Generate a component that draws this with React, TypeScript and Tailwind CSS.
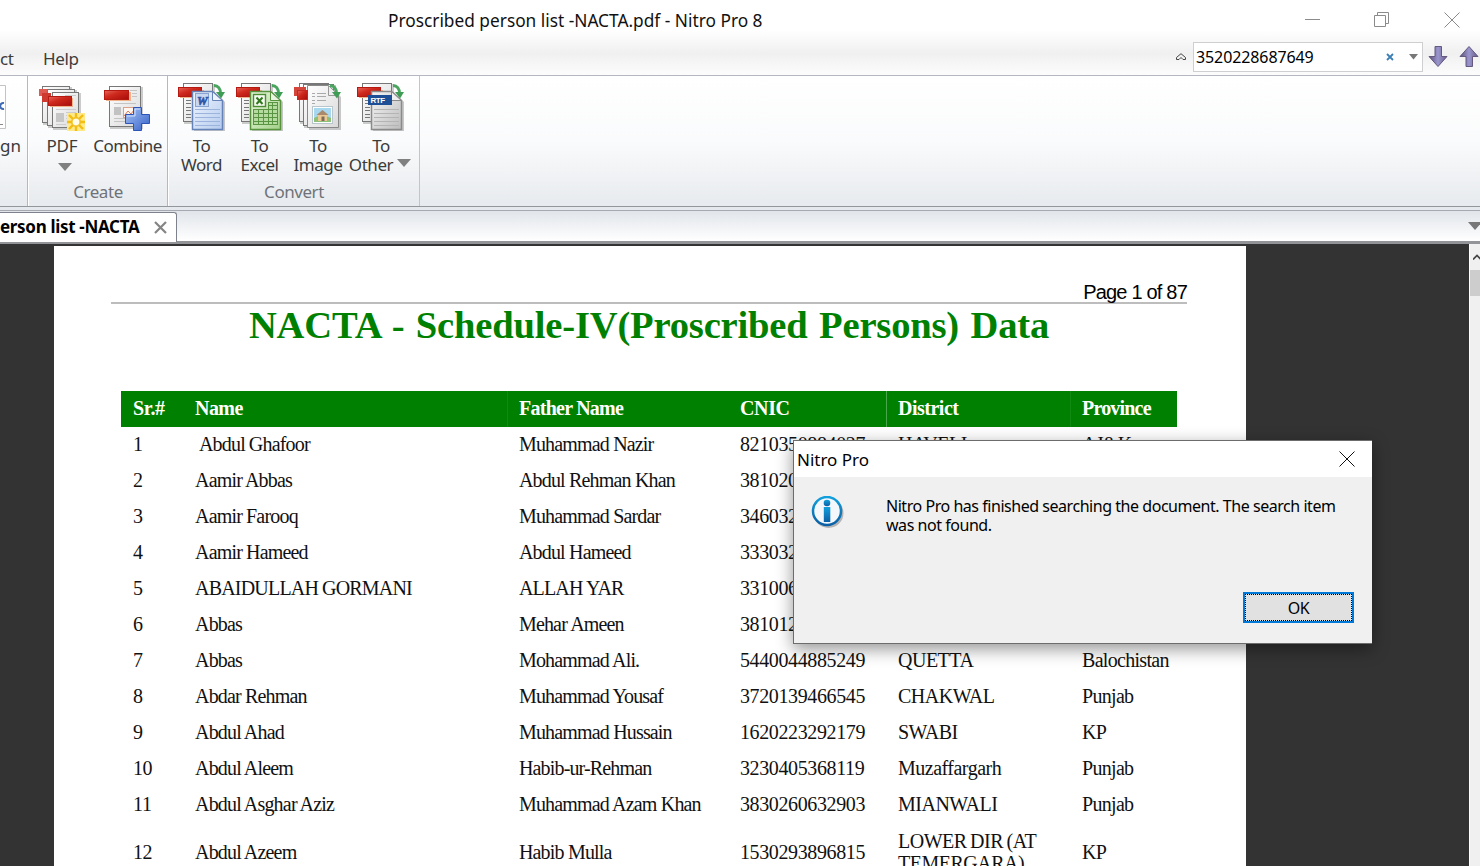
import type { ReactNode } from 'react';

const rows: string[][] = [
  ['1', '\u00a0Abdul Ghafoor', 'Muhammad Nazir', '8210350884027', 'HAVELI', 'AJ&K'],
  ['2', 'Aamir Abbas', 'Abdul Rehman Khan', '381020', '', ''],
  ['3', 'Aamir Farooq', 'Muhammad Sardar', '346032', '', ''],
  ['4', 'Aamir Hameed', 'Abdul Hameed', '333032', '', ''],
  ['5', 'ABAIDULLAH GORMANI', 'ALLAH YAR', '331006', '', ''],
  ['6', 'Abbas', 'Mehar Ameen', '381012', '', ''],
  ['7', 'Abbas', 'Mohammad Ali.', '5440044885249', 'QUETTA', 'Balochistan'],
  ['8', 'Abdar Rehman', 'Muhammad Yousaf', '3720139466545', 'CHAKWAL', 'Punjab'],
  ['9', 'Abdul Ahad', 'Muhammad Hussain', '1620223292179', 'SWABI', 'KP'],
  ['10', 'Abdul Aleem', 'Habib-ur-Rehman', '3230405368119', 'Muzaffargarh', 'Punjab'],
  ['11', 'Abdul Asghar Aziz', 'Muhammad Azam Khan', '3830260632903', 'MIANWALI', 'Punjab'],
  ['12', 'Abdul Azeem', 'Habib Mulla', '1530293896815', 'LOWER DIR (AT TEMERGARA)', 'KP'],
];

const headers = ['Sr.#', 'Name', 'Father Name', 'CNIC', 'District', 'Province'];

const cellStyles = [
  '',
  'tracking-[-0.800px] [word-spacing:-0.300px]',
  'tracking-[-0.850px] [word-spacing:0.200px]',
  '',
  'tracking-[-0.500px] [word-spacing:-1px]',
  'tracking-[-0.700px]',
];

const headerStyles = [
  '',
  'tracking-[-0.550px]',
  'tracking-[-0.750px] border-l border-[#108a10]',
  '',
  'tracking-[-0.500px] border-l border-[#4aa64a]',
  'tracking-[-0.800px] border-l border-[#108a10]',
];

const headerPads = ['pl-[12px]', 'pl-[12px]', 'pl-[11px]', 'pl-[12px]', 'pl-[11px]', 'pl-[11px]'];

function Defs() {
  return (
    <svg className="absolute h-0 w-0" aria-hidden="true">
      <defs>
        <linearGradient id="red" x1="0" y1="0" x2="1" y2="1">
          <stop offset="0" stopColor="#e8675c" />
          <stop offset="0.4" stopColor="#cf2a1e" />
          <stop offset="1" stopColor="#a80c08" />
        </linearGradient>
        <linearGradient id="paper" x1="0" y1="0" x2="1" y2="1">
          <stop offset="0" stopColor="#ffffff" />
          <stop offset="1" stopColor="#d9d9d9" />
        </linearGradient>
        <linearGradient id="word" x1="0" y1="0" x2="1" y2="1">
          <stop offset="0" stopColor="#f2f7ff" />
          <stop offset="1" stopColor="#b4cbee" />
        </linearGradient>
        <linearGradient id="excel" x1="0" y1="0" x2="1" y2="1">
          <stop offset="0" stopColor="#e9f7df" />
          <stop offset="1" stopColor="#a3d188" />
        </linearGradient>
        <linearGradient id="grey" x1="0" y1="0" x2="1" y2="1">
          <stop offset="0" stopColor="#f6f6f6" />
          <stop offset="1" stopColor="#bcbcbc" />
        </linearGradient>
        <linearGradient id="plus" x1="0" y1="0" x2="1" y2="1">
          <stop offset="0" stopColor="#a8c4f5" />
          <stop offset="1" stopColor="#3562c8" />
        </linearGradient>
        <linearGradient id="arrow" x1="0" y1="0" x2="1" y2="0">
          <stop offset="0" stopColor="#5b4f78" />
          <stop offset="0.5" stopColor="#9a97cf" />
          <stop offset="1" stopColor="#665a85" />
        </linearGradient>
        <linearGradient id="info" x1="0" y1="0" x2="0" y2="1">
          <stop offset="0" stopColor="#12a0dc" />
          <stop offset="1" stopColor="#0b5fa5" />
        </linearGradient>
        <radialGradient id="burst">
          <stop offset="0" stopColor="#fffde0" />
          <stop offset="1" stopColor="#f0b90c" />
        </radialGradient>
      </defs>
    </svg>
  );
}

function Sheet({ x, y, w, h, fill = 'url(#paper)', stroke = '#777' }: { x: number; y: number; w: number; h: number; fill?: string; stroke?: string }) {
  return (
    <>
      <rect x={x + 1} y={y + 1} width={w + 1} height={h + 1} fill="#999" opacity="0.5" />
      <rect x={x + 0.5} y={y + 0.5} width={w - 1} height={h - 1} fill={fill} stroke={stroke} />
    </>
  );
}

function PdfIcon() {
  return (
    <svg width="48" height="48" viewBox="0 0 48 48">
      <Sheet x={4} y={2} w={28} h={37} />
      <rect x="1" y="5" width="9" height="7" fill="#dd5b52" />
      <Sheet x={9} y={5} w={28} h={37} />
      <rect x="4" y="9" width="9" height="9" fill="#cf3a30" />
      <Sheet x={14} y={8} w={27} h={36} />
      <path d="M27 11.500h11M18 25.500h20M28 28.500h10M28 31.500h8M28 34.500h4M18 40.500h10" stroke="#ccc" />
      <rect x="18" y="29" width="8" height="9" fill="#c6c6c6" />
      <rect x="12" y="14" width="23" height="9" fill="#efb28b" />
      <rect x="10.500" y="12.500" width="23" height="9" fill="url(#red)" stroke="#b51a12" />
      <rect x="29" y="29" width="18" height="18" fill="#ffe98a" />
      <path d="M38 29v18M29 38h18M31 31l14 14M45 31L31 45" stroke="#f3bd12" strokeWidth="2.400" />
      <circle cx="38" cy="38" r="5" fill="url(#burst)" />
      <circle cx="38" cy="38" r="3.200" fill="#fffde8" />
    </svg>
  );
}

function CombineIcon() {
  return (
    <svg width="48" height="48" viewBox="0 0 48 48">
      <Sheet x={5} y={2} w={32} h={41} />
      <path d="M26 6.500h7M28 9.500h5M28 12.500h5M10 19.500h22M26 24.500h7M10 34.500h13M10 37.500h15" stroke="#c4c4c4" />
      <rect x="10" y="23" width="7" height="8" fill="#c2c2c2" />
      <rect x="19.500" y="23.500" width="11" height="10" fill="#fff7f0" stroke="#dba08c" />
      <path d="m20 32 4-5 3 3 3-4" fill="none" stroke="#d97b5e" />
      <rect x="2" y="8" width="25" height="9" fill="#efb28b" />
      <rect x="0.500" y="6.500" width="24" height="9" fill="url(#red)" stroke="#b51a12" />
      <path d="M29.500 23.500h8v7h8v9h-8v7h-8v-7h-8v-9h8z" fill="url(#plus)" stroke="#2d55b8" strokeLinejoin="round" />
      <path d="M31 25h5M23 32h8V25" stroke="#d4e2ff" fill="none" />
    </svg>
  );
}

function GreenArrow() {
  return (
    <>
      <path d="M36 2.500c4 0 6.500 3 6.500 8" fill="none" stroke="#4aa55f" strokeWidth="3" />
      <path d="M38 9h9l-4 6.500z" fill="#3f9c55" />
    </>
  );
}

function BackSheet() {
  return (
    <>
      <Sheet x={5} y={0} w={30} h={39} />
      <path d="M8 17.500h5M8 20.500h5M8 24.500h5M8 27.500h5M8 31.500h5M8 34.500h5" stroke="#777" />
      <rect x="2" y="7" width="24" height="8" fill="#efb28b" />
      <rect x="0.500" y="4.500" width="23" height="9" fill="url(#red)" stroke="#b51a12" />
    </>
  );
}

function FoldedSheet({ fill, stroke }: { fill: string; stroke: string }) {
  return (
    <>
      <path d="M16 9h21l10 10v29H16z" fill="#777" opacity="0.4" />
      <path d="M14.500 8.500h20l10 9v29h-30z" fill={fill} stroke={stroke} strokeWidth="1.500" />
      <path d="M34.500 8.500v9h10z" fill="#fff" fillOpacity="0.6" stroke={stroke} />
    </>
  );
}

function WordIcon() {
  return (
    <svg width="48" height="48" viewBox="0 0 48 48">
      <BackSheet />
      <FoldedSheet fill="url(#word)" stroke="#6583b8" />
      <GreenArrow />
      <path d="M17 26.500h25M17 30.500h25M17 34.500h25M17 38.500h25M17 42.500h25" stroke="#9cb4dc" />
      <rect x="17.500" y="10.500" width="13" height="13" fill="#c9d8f2" stroke="#8aa2d0" />
      <text x="24" y="21.500" textAnchor="middle" fontSize="12" fontWeight="700" fontStyle="italic" fontFamily="Liberation Serif, serif" fill="#2f55a8" stroke="#2f55a8" strokeWidth="0.600">W</text>
    </svg>
  );
}

function ExcelIcon() {
  return (
    <svg width="48" height="48" viewBox="0 0 48 48">
      <BackSheet />
      <FoldedSheet fill="url(#excel)" stroke="#57923c" />
      <GreenArrow />
      <path d="M32 19h10v23H17V26h15z" fill="#589442" />
      <path d="M18 27h4v3h-4zM23 27h4v3h-4zM28 27h4v3h-4zM33 27h3v3h-3zM37 27h4v3h-4zM18 31h4v3h-4zM23 31h4v3h-4zM28 31h4v3h-4zM33 31h3v3h-3zM37 31h4v3h-4zM18 35h4v3h-4zM23 35h4v3h-4zM28 35h4v3h-4zM33 35h3v3h-3zM37 35h4v3h-4zM18 39h4v2h-4zM23 39h4v2h-4zM28 39h4v2h-4zM33 39h3v2h-3zM37 39h4v2h-4zM33 20h3v2h-3zM37 20h4v2h-4zM33 23h3v3h-3zM37 23h4v3h-4z" fill="#b5dba0" />
      <rect x="17.500" y="11.500" width="12" height="12" fill="#f4fbef" stroke="#4c8c33" strokeWidth="1.400" />
      <path d="m20.500 14.500 6 6.500M26.500 14.500l-6 6.500" stroke="#32781f" strokeWidth="2" />
    </svg>
  );
}

function ImageIcon() {
  return (
    <svg width="48" height="48" viewBox="0 0 48 48">
      <Sheet x={5} y={0} w={30} h={39} />
      <Sheet x={9} y={1} w={31} h={42} />
      <path d="M15 3h21l11 11v33H15z" fill="#777" opacity="0.4" />
      <path d="M13.500 2.500h21l10 10v32h-31z" fill="url(#paper)" stroke="#888" />
      <path d="M34.500 2.500v10h10z" fill="#eee" stroke="#999" />
      <GreenArrow />
      <path d="M18 10.500h3M23 10.500h9M18 13.500h3M23 13.500h9M18 17.500h3M23 17.500h9M18 20.500h3" stroke="#aaa" />
      <rect x="18.500" y="23.500" width="20" height="17" fill="#fff" stroke="#b7c6cd" />
      <rect x="20" y="25" width="17" height="14" fill="#a8d8f0" />
      <path d="M20 35c5-3 11-3 17 0v4H20z" fill="#8fc07a" />
      <path d="m22.500 32 6-5 6 5z" fill="#a98a6c" />
      <path d="M24 32h9v6h-9z" fill="#ecc894" />
      <path d="M27.500 33.500h3V38h-3z" fill="#7d6d5b" />
      <rect x="0" y="4" width="12" height="9" fill="#d4463c" />
      <rect x="3.500" y="7.500" width="10" height="9" fill="url(#red)" stroke="#c02a20" />
    </svg>
  );
}

function OtherIcon() {
  return (
    <svg width="48" height="48" viewBox="0 0 48 48">
      <BackSheet />
      <FoldedSheet fill="url(#grey)" stroke="#8a8a8a" />
      <GreenArrow />
      <path d="M17 26.500h25M17 30.500h25M17 34.500h25M17 38.500h25M17 42.500h25" stroke="#b4b4b4" />
      <rect x="11" y="12" width="24" height="10" fill="#1d4f96" />
      <text x="20.500" y="19.600" textAnchor="middle" fontSize="8" fontWeight="700" fontFamily="Liberation Sans, sans-serif" fill="#fff">RTF</text>
    </svg>
  );
}

function Triangle() {
  return (
    <svg width="14" height="8" viewBox="0 0 14 8">
      <path d="M0 0h14L7 8z" fill="#808080" />
    </svg>
  );
}

function Tool({ icon, className, children }: { icon: ReactNode; className: string; children: ReactNode }) {
  return (
    <button className={`flex shrink-0 flex-col items-center ${className}`}>
      {icon}
      {children}
    </button>
  );
}

function TitleBar() {
  return (
    <div className="flex h-[41px] items-center">
      <h1 className="pl-[388px] text-[17.300px] leading-[24px] whitespace-nowrap text-[#111]">
        Proscribed person list -NACTA.pdf - Nitro Pro 8
      </h1>
      <div className="ml-auto flex items-center gap-[54px] pr-[20px] text-[#8b8b8b]">
        <svg width="15" height="16" viewBox="0 0 15 16" stroke="currentColor"><path d="M0 6.500h15" /></svg>
        <svg className="-mt-[2px]" width="16" height="16" viewBox="0 0 16 16" fill="none" stroke="currentColor"><path d="M.5 3.500h11v11H.5zM3.500 3.500v-3h11v11h-3" /></svg>
        <svg className="-mt-[2px]" width="16" height="16" viewBox="0 0 16 16" stroke="currentColor"><path d="m.5.5 15 15M15.500.5l-15 15" /></svg>
      </div>
    </div>
  );
}

function MenuBar() {
  return (
    <div className="flex h-[35px] items-start border-b border-[#b4b7bf]">
      <div className="flex pt-[6px] text-[17px] leading-[24px] tracking-[-0.350px] text-[#3c3c3c]">
        <span className="w-[43px]">ct</span>
        <span>Help</span>
      </div>
      <div className="ml-auto flex w-[304px] items-center pt-px">
        <svg className="shrink-0" width="10" height="8" viewBox="0 0 10 8" fill="none" stroke="#444"><path d="M.5 4.500 5 .7l4.500 3.800v2H7L5 4.500l-2 2H.5z" /></svg>
        <div className="ml-[7px] flex h-[30px] w-[230px] shrink-0 items-center border border-[#cfcfd2] bg-white pl-[2px]">
          <span className="w-[190px] pb-px text-[16px] tracking-[-0.100px] text-black">3520228687649</span>
          <svg width="8" height="8" viewBox="0 0 8 8" stroke="#3b7fb5" strokeWidth="1.800"><path d="m1 1 6 6M7 1 1 7" /></svg>
          <svg className="-mt-px ml-[15px]" width="9" height="6" viewBox="0 0 9 6"><path d="M0 0h9L4.500 5.500z" fill="#777" /></svg>
        </div>
        <svg className="-mt-px ml-[5px] shrink-0" width="20" height="22" viewBox="0 0 20 22"><path d="M7 .5h6.500v10h5.500L10 20.500 1 10.500h6z" fill="url(#arrow)" stroke="#65597f" /></svg>
        <svg className="-mt-px ml-[11px] shrink-0" width="20" height="22" viewBox="0 0 20 22"><path d="M7 20.500h6.500v-10h5.500L10 .5 1 10.500h6z" fill="url(#arrow)" stroke="#65597f" /></svg>
      </div>
    </div>
  );
}

function Ribbon() {
  return (
    <div className="flex h-[131px] border-b border-[#92979c] bg-linear-to-b from-white via-[#fafbfc] to-[#e7eaee] text-[17px] leading-[19px] tracking-[-0.450px] text-[#3b3b3b]">
      <div className="flex w-[28px] flex-col border-r border-[#b5b8bc] pt-[8px]">
        <svg width="8" height="48" viewBox="0 0 8 48" fill="none">
          <path d="M0 1.500h5.500v43H0" fill="#fff" stroke="#c3c3c3" />
          <path d="M4 19c-5-1-5 7 0 6" stroke="#3f69b0" strokeWidth="2" />
          <path d="M0 40.500h3" stroke="#888" />
        </svg>
        <span className="mt-[4px] tracking-normal">gn</span>
      </div>
      <div className="flex w-[140px] flex-col border-r border-l border-r-[#b5b8bc] border-l-white pt-[8px]">
        <div className="flex h-[98px]">
          <Tool icon={<PdfIcon />} className="ml-[9px] w-[48px]">
            <span className="mt-[4px] tracking-[-0.200px]">PDF</span>
            <span className="mt-[8px] ml-[6px]"><Triangle /></span>
          </Tool>
          <Tool icon={<CombineIcon />} className="ml-[7px] w-[69px]">
            <span className="mt-[4px]">Combine</span>
          </Tool>
        </div>
        <div className="text-center text-[#6f7379]">Create</div>
      </div>
      <div className="flex w-[252px] flex-col border-r border-l border-r-[#c2c5c9] border-l-white pt-[7px]">
        <div className="flex h-[99px] pl-[9px]">
          <Tool icon={<WordIcon />} className="w-[48px]"><span className="mt-[5px] -ml-px text-center">To<br />Word</span></Tool>
          <Tool icon={<ExcelIcon />} className="ml-[10px] w-[48px]"><span className="mt-[5px] -ml-px text-center">To<br />Excel</span></Tool>
          <Tool icon={<ImageIcon />} className="ml-[10px] w-[48px]"><span className="mt-[5px] text-center">To<br />Image</span></Tool>
          <Tool icon={<OtherIcon />} className="ml-[7px] w-[64px]">
            <span className="mt-[5px]">To</span>
            <span className="-ml-[2px] flex items-center gap-[4px]"><span>Other</span><span className="-mt-[3px]"><Triangle /></span></span>
          </Tool>
        </div>
        <div className="text-center text-[#6f7379]">Convert</div>
      </div>
    </div>
  );
}

function TabStrip() {
  return (
    <div className="bg-[#e5e8ec] pt-[3px]">
      <div className="flex h-[34px] items-start justify-between border-t border-b-3 border-t-[#a5a9b2] border-b-[#929497] bg-linear-to-b from-[#e1e5ea] to-white">
        <div className="mt-px flex h-[30px] w-[177px] items-center rounded-tr-[3px] border-t border-r border-[#7d828c] bg-white text-[17px] font-bold tracking-[-0.320px] text-black">
          <span className="w-[154px] pb-px whitespace-nowrap">erson list -NACTA</span>
          <svg width="13" height="13" viewBox="0 0 13 13" stroke="#858585" strokeWidth="2.200"><path d="m1 1 11 11M12 1 1 12" /></svg>
        </div>
        <svg className="mt-[11px]" width="12" height="8" viewBox="0 0 12 8"><path d="M0 0h14L7 8z" fill="#777" /></svg>
      </div>
    </div>
  );
}

function Page() {
  return (
    <article className="h-[620px] w-[1192px] shrink-0 overflow-hidden bg-white pl-[57px] font-['Liberation_Serif',serif]">
      <header className="flex h-[58px] w-[1076px] items-end justify-end border-b-2 border-[#bdbdbd] font-['Liberation_Sans',sans-serif] text-[20px] leading-[20px] tracking-[-0.800px] text-black">
        Page 1 of 87
      </header>
      <h2 className="-mt-px w-[1076px] text-center text-[38.600px] leading-[44px] font-bold tracking-[-0.180px] [word-spacing:2px] whitespace-nowrap text-[#008000]">
        NACTA - Schedule-IV(Proscribed Persons) Data
      </h2>
      <table className="mt-[44px] ml-[10px] w-[1056px] table-fixed border-separate border-spacing-0 text-left text-[20px] leading-[22px] tracking-[-0.380px] text-[#111]">
        <colgroup>
          <col className="w-[62px]" />
          <col className="w-[324px]" />
          <col className="w-[221px]" />
          <col className="w-[158px]" />
          <col className="w-[184px]" />
          <col className="w-[107px]" />
        </colgroup>
        <thead>
          <tr className="h-[36px] bg-[#008000] text-white">
            {headers.map((h, i) => (
              <th key={h} className={`pt-0 pb-[2px] font-bold ${headerPads[i]} ${headerStyles[i]}`}>{h}</th>
            ))}
          </tr>
        </thead>
        <tbody>
          {rows.map((row) => (
            <tr key={row[0]} className="h-[36px] last:h-[60px]">
              {row.map((cell, i) => (
                <td key={i} className={`pt-0 pb-[2px] pl-[12px] align-middle ${cellStyles[i]}`}>{cell}</td>
              ))}
            </tr>
          ))}
        </tbody>
      </table>
    </article>
  );
}

function SearchDialog() {
  return (
    <div role="dialog" className="absolute top-[440px] left-[793px] flex h-[204px] w-[579px] flex-col border border-r-0 border-[#6c6c6c] bg-[#f0f0f0] text-black shadow-[0_5px_16px_rgba(0,0,0,0.42)]">
      <div className="flex h-[36px] items-center justify-between bg-white pr-[17px] pl-[3px] text-[17px]">
        <span className="pt-px">Nitro Pro</span>
        <svg className="-mt-px" width="16" height="16" viewBox="0 0 16 16" stroke="#111"><path d="m.5.5 15 15M15.500.5l-15 15" /></svg>
      </div>
      <div className="flex h-[115px] pt-[19px] pl-[17px]">
        <svg className="shrink-0" width="34" height="34" viewBox="0 0 34 34">
          <circle cx="17.500" cy="17" r="15" fill="#777" opacity="0.5" />
          <circle cx="16" cy="15" r="14" fill="#f4f8fb" stroke="url(#info)" strokeWidth="2.500" />
          <circle cx="16" cy="7" r="3.300" fill="url(#info)" />
          <rect x="12.800" y="11" width="6.500" height="15" fill="url(#info)" />
        </svg>
        <p className="mt-px ml-[41px] text-[16px] leading-[19px] tracking-[-0.460px] whitespace-nowrap">
          Nitro Pro has finished searching the document. The search item<br />was not found.
        </p>
      </div>
      <button className="mr-[18px] h-[31px] w-[111px] self-end border-2 border-[#0078d7] bg-[#e1e1e1] text-[16px] tracking-[-0.500px]">
        <span className="flex h-full items-center justify-center border border-dotted border-black leading-none">OK</span>
      </button>
    </div>
  );
}

export default function App() {
  return (
    <div className="relative h-[866px] w-[1480px] overflow-hidden bg-white font-['Noto_Sans',sans-serif]">
      <Defs />
      <div className="bg-linear-to-b from-white from-40% via-[#f0f0f0] via-70% to-[#fdfdfd]">
        <TitleBar />
        <MenuBar />
      </div>
      <Ribbon />
      <TabStrip />
      <main className="flex h-[622px] justify-between bg-[#333] pl-[54px]">
        <div className="pt-[2px]"><Page /></div>
        <div className="flex w-[11px] flex-col items-center overflow-hidden border-l border-white bg-[#f0f0f0]">
          <svg className="mt-[10px] ml-[3px] h-[6px] w-[8px] shrink-0" viewBox="0 0 8 6" fill="none" stroke="#444" strokeWidth="1.700"><path d="m0 5.500 4-4 4 4" /></svg>
          <div className="mt-[10px] h-[26px] w-full shrink-0 bg-[#cdcdcd]" />
        </div>
      </main>
      <SearchDialog />
    </div>
  );
}
